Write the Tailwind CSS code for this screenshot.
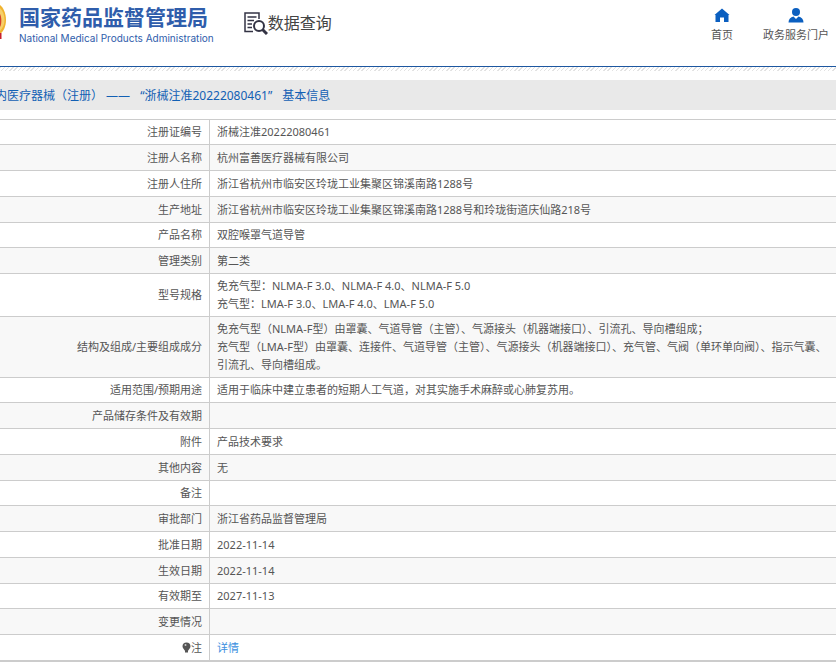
<!DOCTYPE html>
<html lang="zh-CN">
<head>
    <meta charset="UTF-8">
    <meta name="viewport" content="width=device-width, initial-scale=1.0">
    <title>数据查询 - 国家药品监督管理局</title>
    <script src="https://cdn.jsdelivr.net/npm/@tailwindcss/browser@4"></script>
</head>
<body class="bg-white overflow-x-hidden text-[11px] leading-[18px] text-[#555] font-['Noto_Sans','Noto_Sans_CJK_SC',sans-serif]">
    <header class="flex items-start justify-between h-[66px] pr-[7px]">
        <div class="flex items-start">
            <svg class="w-[6px] h-9 mt-1" viewBox="0 0 6 36" aria-hidden="true">
                <path d="M0 1C3 3 6 9 6 16C6 23 3 28 0 30Z" fill="#f0b32e"/>
                <path d="M0 4C3 7 4.500 11 4.500 16C4.500 20 3 24 0 27Z" fill="#f6cf6a"/>
                <path d="M0 10C1.500 12 2 20 0 23Z" fill="#d8442a"/>
                <path d="M0 29L1.500 29V35H0Z" fill="#c8202a"/>
            </svg>
            <div class="ml-[13px] mt-1 text-[#2f5dab]">
                <h1 class="text-[21px] leading-[26px] font-bold">国家药品监督管理局</h1>
                <p class="font-[Inter,sans-serif] text-[10px] leading-4">National Medical Products Administration</p>
            </div>
            <div class="flex items-center ml-[30px] mt-[11px]">
                <svg class="w-6 h-6" viewBox="0 0 24 24" fill="none" stroke="#333344" aria-hidden="true">
                    <path d="M15 8V2H1V20.500H9" stroke-width="1.500"/>
                    <path d="M3.500 6H12.500M3.500 9.500H10M3.500 13H8M3.500 16.500H8" stroke-width="1.500"/>
                    <circle cx="15" cy="15" r="5" stroke-width="2"/>
                    <path d="M18.500 18.500L23 23" stroke-width="3"/>
                </svg>
                <h2 class="text-base leading-6 text-[#444]">数据查询</h2>
            </div>
        </div>
        <nav class="flex gap-[30px] pt-2">
            <a href="#" class="flex flex-col items-center gap-0.5">
                <svg class="w-4 h-4" viewBox="0 0 16 16" fill="#0b5fc0" aria-hidden="true">
                    <path d="M8 0.500L15.500 7H14.500V14H10V9.500H6V14H1.500V7H0.500Z"/>
                </svg>
                <span>首页</span>
            </a>
            <a href="#" class="flex flex-col items-center gap-0.5">
                <svg class="w-4 h-4" viewBox="0 0 16 16" fill="#0b5fc0" aria-hidden="true">
                    <circle cx="8" cy="4" r="4"/>
                    <path d="M0.500 14.500C0.500 11 2.500 9 5.500 8.500L8 11L10.500 8.500C13.500 9 15.500 11 15.500 14.500Z"/>
                </svg>
                <span>政务服务门户</span>
            </a>
        </nav>
    </header>
    <div class="h-[5px] border-t border-[#1d57a0] bg-[repeating-linear-gradient(135deg,#e2e2e2_0,#e2e2e2_1px,#fff_1px,#fff_3px)]"></div>

    <main>
        <h3 class="flex gap-2.5 mt-[9px] h-[30px] bg-[#e9e9e9] text-xs leading-[32px] text-[#1260b4] whitespace-nowrap">
            <span class="-ml-[5px]">内医疗器械（注册） ——</span>
            <span>“浙械注准20222080461”</span>
            <span>基本信息</span>
        </h3>

        <table class="mt-[9px] w-full border-separate border-spacing-0 border-t border-b border-[#ccc] [&_tr]:h-[26px] [&_tr:nth-child(4n+1)]:h-[25px] [&_tr:nth-child(even)]:bg-[#f8f8f8] [&_th]:w-[210px] [&_th]:border-b [&_th]:border-r [&_th]:border-[#ccc] [&_th]:py-[3px] [&_th]:pr-[7px] [&_th]:text-right [&_th]:font-normal [&_td]:border-b [&_td]:border-[#ccc] [&_td]:py-[3px] [&_td]:pl-[7px]">
            <tbody>
                <tr><th scope="row">注册证编号</th><td>浙械注准20222080461</td></tr>
                <tr><th scope="row">注册人名称</th><td>杭州富善医疗器械有限公司</td></tr>
                <tr><th scope="row">注册人住所</th><td>浙江省杭州市临安区玲珑工业集聚区锦溪南路1288号</td></tr>
                <tr><th scope="row">生产地址</th><td>浙江省杭州市临安区玲珑工业集聚区锦溪南路1288号和玲珑街道庆仙路218号</td></tr>
                <tr><th scope="row">产品名称</th><td>双腔喉罩气道导管</td></tr>
                <tr><th scope="row">管理类别</th><td>第二类</td></tr>
                <tr><th scope="row">型号规格</th><td>免充气型：NLMA-F 3.0、NLMA-F 4.0、NLMA-F 5.0<br>充气型：LMA-F 3.0、LMA-F 4.0、LMA-F 5.0</td></tr>
                <tr><th scope="row">结构及组成/主要组成成分</th><td>免充气型（NLMA-F型）由罩囊、气道导管（主管）、气源接头（机器端接口）、引流孔、导向槽组成；<br>充气型（LMA-F型）由罩囊、连接件、气道导管（主管）、气源接头（机器端接口）、充气管、气阀（单环单向阀）、指示气囊、引流孔、导向槽组成。</td></tr>
                <tr><th scope="row">适用范围/预期用途</th><td>适用于临床中建立患者的短期人工气道，对其实施手术麻醉或心肺复苏用。</td></tr>
                <tr><th scope="row">产品储存条件及有效期</th><td></td></tr>
                <tr><th scope="row">附件</th><td>产品技术要求</td></tr>
                <tr><th scope="row">其他内容</th><td>无</td></tr>
                <tr><th scope="row">备注</th><td></td></tr>
                <tr><th scope="row">审批部门</th><td>浙江省药品监督管理局</td></tr>
                <tr><th scope="row">批准日期</th><td>2022-11-14</td></tr>
                <tr><th scope="row">生效日期</th><td>2022-11-14</td></tr>
                <tr><th scope="row">有效期至</th><td>2027-11-13</td></tr>
                <tr><th scope="row">变更情况</th><td></td></tr>
                <tr>
                    <th scope="row">
                        <span class="flex items-center justify-end">
                            <svg class="w-[9px] h-[11px]" viewBox="0 0 9 11" aria-hidden="true">
                                <path d="M4.500 0.500C7 0.500 8.500 2 8.500 4.300C8.500 6 7 7 6.300 8.500H2.700C2 7 0.500 6 0.500 4.300C0.500 2 2 0.500 4.500 0.500ZM3 8.500H6V10.500H3Z" fill="#555"/>
                                <circle cx="3.500" cy="3" r="1" fill="#ccc"/>
                            </svg>注
                        </span>
                    </th>
                    <td><a href="#" class="text-[#3b8fe0]">详情</a></td>
                </tr>
            </tbody>
        </table>
    </main>
</body>
</html>
